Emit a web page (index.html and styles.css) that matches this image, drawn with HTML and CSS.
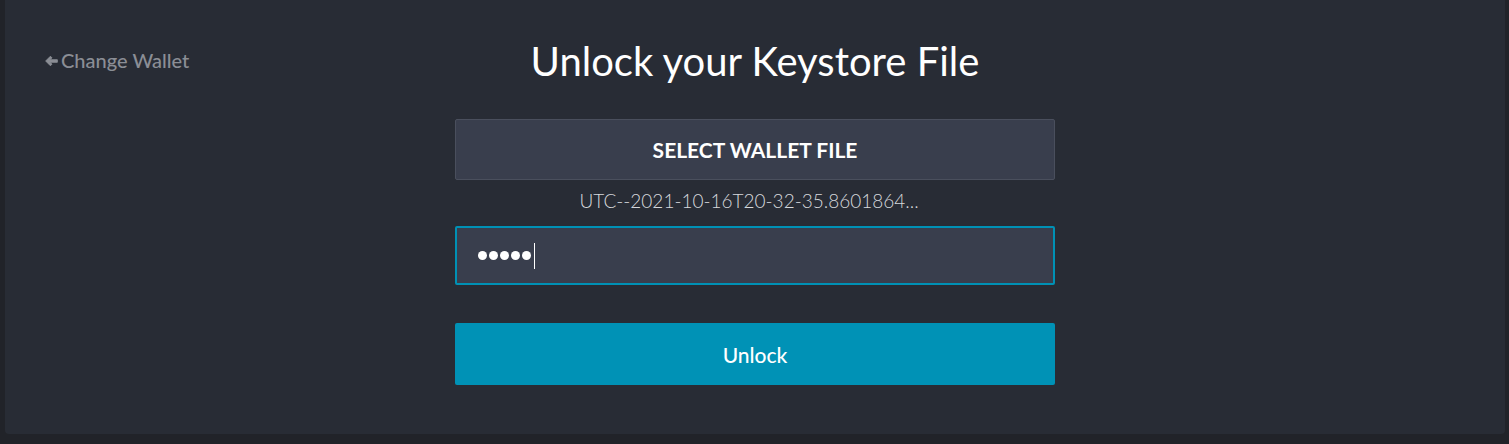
FILE: index.html
```html
<!DOCTYPE html>
<html>
<head>
<meta charset="utf-8">
<link rel="stylesheet" href="styles.css">
</head>
<body>
<div class="panel">
  <div class="header">
    <a class="back" href="#"><svg class="back-icon" viewBox="0 0 12 11" width="13" height="12"><polygon points="0.6,5.5 5,1.1 6.5,2.6 4.4,4.3 11.4,4.3 11.4,6.7 4.4,6.7 6.5,8.4 5,9.9" fill="currentColor" stroke="currentColor" stroke-width="0.8" stroke-linejoin="round"/></svg>Change Wallet</a>
    <h1 class="title">Unlock your Keystore File</h1>
    <div></div>
  </div>
  <div class="form">
    <button class="select-btn" type="button">SELECT WALLET FILE</button>
    <div class="filename">UTC--2021-10-16T20-32-35.8601864...</div>
    <div class="pw-field" aria-label="password"><span class="dot"></span><span class="dot"></span><span class="dot"></span><span class="dot"></span><span class="dot"></span><span class="caret"></span></div>
    <button class="unlock-btn" type="button">Unlock</button>
  </div>
</div>
</body>
</html>
```

FILE: styles.css
```css
html, body {
  margin: 0;
  padding: 0;
}
body {
  background: #212329;
  height: 444px;
  padding: 0 4px 0 5px;
  box-sizing: border-box;
  font-family: Lato, "Liberation Sans", sans-serif;
}
.panel {
  background: #282c35;
  height: 434px;
  border-radius: 0 0 4px 4px;
  box-sizing: border-box;
}
.header {
  display: grid;
  grid-template-columns: 1fr auto 1fr;
  align-items: start;
  padding-top: 36px;
}
.back {
  display: flex;
  align-items: center;
  gap: 3px;
  padding-left: 40px;
  padding-top: 13px;
  color: #8b8e95;
  text-decoration: none;
  font-size: 20px;
  line-height: 22px;
  font-weight: 500;
}
.back-icon {
  color: #8b8e95;
  margin-top: 1px;
}
.title {
  margin: 0;
  font-weight: 400;
  font-size: 40px;
  line-height: 50px;
  color: #ffffff;
  text-align: center;
}
.form {
  width: 600px;
  margin: 33px auto 0;
  display: flex;
  flex-direction: column;
}
.select-btn {
  height: 61px;
  background: #393e4d;
  border: 1px solid #4a4f5d;
  border-radius: 2px;
  color: #ffffff;
  font-family: Lato, "Liberation Sans", sans-serif;
  font-weight: 700;
  font-size: 21px;
  padding: 0;
}
.filename {
  text-align: center;
  color: #d6d8dc;
  font-weight: 300;
  font-size: 19px;
  line-height: 24px;
  margin-top: 9px;
  padding-right: 12px;
}
.pw-field {
  margin-top: 13px;
  height: 59px;
  box-sizing: border-box;
  background: #393e4d;
  border: 2px solid #0091b5;
  border-radius: 2px;
  display: flex;
  align-items: center;
  gap: 2px;
  padding-left: 21px;
}
.dot {
  width: 9px;
  height: 9px;
  border-radius: 50%;
  background: #ffffff;
}
.caret {
  width: 1px;
  height: 26px;
  background: #ffffff;
  margin-left: 1px;
}
.unlock-btn {
  margin-top: 38px;
  height: 62px;
  background: #0092b6;
  border: none;
  border-radius: 2px;
  color: #ffffff;
  font-family: Lato, "Liberation Sans", sans-serif;
  font-weight: 500;
  font-size: 21px;
  padding: 0;
}
```
